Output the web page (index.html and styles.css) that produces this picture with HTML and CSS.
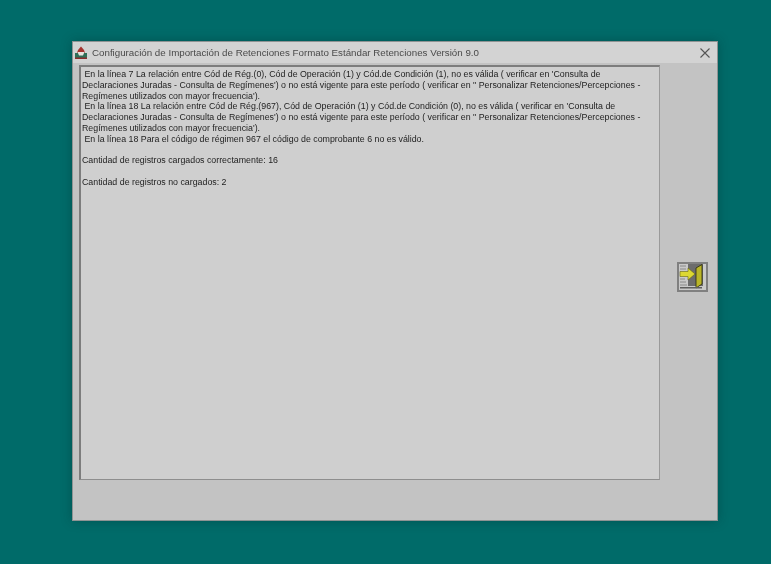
FILE: index.html
```html
<!DOCTYPE html>
<html lang="es">
<head>
<meta charset="utf-8">
<title>Configuración de Importación</title>
<link rel="stylesheet" href="styles.css">
</head>
<body>
<div class="window">
  <div class="titlebar">
    <svg class="appicon" width="14" height="14" viewBox="0 0 14 14">
      <path d="M7 0.500 L10 4 L11 7 H3 L4 4 Z" fill="#a5332e"/>
      <path d="M1 7 H13 V13 H1 Z" fill="#2f6f58"/>
      <path d="M3.500 6 H10.500 L9 9.500 H5 Z" fill="#e8e4e0"/>
      <rect x="1" y="11.500" width="12" height="1.500" fill="#8a2c2c"/>
    </svg>
    <span class="title">Configuración de Importación de Retenciones Formato Estándar Retenciones Versión 9.0</span>
    <svg class="close" width="10" height="10" viewBox="0 0 10 10">
      <path d="M0.500 0.500 L9.500 9.500 M9.500 0.500 L0.500 9.500" stroke="#555" stroke-width="1.100" fill="none"/>
    </svg>
  </div>
  <div class="body">
    <div class="log">
      <div class="line"> En la línea 7 La relación entre Cód de Rég.(0), Cód de Operación (1) y Cód.de Condición (1), no es válida ( verificar en 'Consulta de</div>
      <div class="line">Declaraciones Juradas - Consulta de Regímenes') o no está vigente para este período ( verificar en " Personalizar Retenciones/Percepciones -</div>
      <div class="line">Regímenes utilizados con mayor frecuencia').</div>
      <div class="line"> En la línea 18 La relación entre Cód de Rég.(967), Cód de Operación (1) y Cód.de Condición (0), no es válida ( verificar en 'Consulta de</div>
      <div class="line">Declaraciones Juradas - Consulta de Regímenes') o no está vigente para este período ( verificar en " Personalizar Retenciones/Percepciones -</div>
      <div class="line">Regímenes utilizados con mayor frecuencia').</div>
      <div class="line"> En la línea 18 Para el código de régimen 967 el código de comprobante 6 no es válido.</div>
      <div class="line">&nbsp;</div>
      <div class="line">Cantidad de registros cargados correctamente: 16</div>
      <div class="line">&nbsp;</div>
      <div class="line">Cantidad de registros no cargados: 2</div>
    </div>
    <div class="side">
      <div class="exit">
        <svg width="31" height="30" viewBox="0 0 31 30">
          <rect x="0" y="0" width="31" height="30" fill="#808080"/>
          <rect x="2" y="2" width="27" height="26" fill="#c9c9c9"/>
          <rect x="11" y="2" width="15" height="22" fill="#6c6c6c"/>
          <path d="M3 4 H9 M3 7 H9 M3 17 H8 M3 20 H9 M3 23 H10" stroke="#8a8a8a" stroke-width="1"/>
          <path d="M19 6 L25 2.500 V22 L19 26 Z" fill="#b9b528" stroke="#26260c" stroke-width="0.800"/>
          <path d="M3 9.500 H11 V6 L18 12 L11 18 V14.500 H3 Z" fill="#dcd832" stroke="#66660f" stroke-width="0.600"/>
          <rect x="3" y="25" width="22" height="1.500" fill="#5e5e5e"/>
        </svg>
      </div>
    </div>
  </div>
</div>
</body>
</html>
```
FILE: styles.css
```css
* { box-sizing: border-box; }
html, body { margin: 0; height: 100%; }
body {
  background: #006b69;
  font-family: "Liberation Sans", Arial, sans-serif;
  padding: 41px 0 0 72px;
  overflow: hidden;
}
.window {
  width: 646px;
  height: 480px;
  background: #c3c3c3;
  border: 1px solid #8f9393;
  box-shadow: 0 0 10px rgba(0, 40, 40, 0.35);
  display: flex;
  flex-direction: column;
}
.titlebar {
  height: 21px;
  flex: none;
  background: #d3d3d3;
  display: flex;
  align-items: center;
  padding: 0 7px 0 1px;
}
.appicon { flex: none; margin-right: 4px; filter: blur(0.6px); }
.title {
  flex: 1;
  font-size: 9.750px;
  color: #4a4a4a;
  filter: blur(0.7px);
  white-space: nowrap;
}
.close { flex: none; filter: blur(0.5px); }
.body {
  flex: 1;
  display: flex;
  padding: 2px 0 40px 6px;
}
.log {
  width: 581px;
  flex: none;
  background: #cfcfcf;
  border: 2px solid #7d7d7d;
  border-right: 1px solid #9a9a9a;
  border-bottom: 1px solid #8e8e8e;
  padding: 2px 0 2px 1px;
  font-size: 8.820px;
  line-height: 10.800px;
  color: #1e1e1e;
}
.line { white-space: pre; filter: blur(0.75px); }
.side {
  flex: 1;
  display: flex;
  justify-content: flex-end;
  align-items: flex-start;
  padding: 197px 9px 0 0;
}
.exit { filter: blur(0.7px); height: 30px; }
```
